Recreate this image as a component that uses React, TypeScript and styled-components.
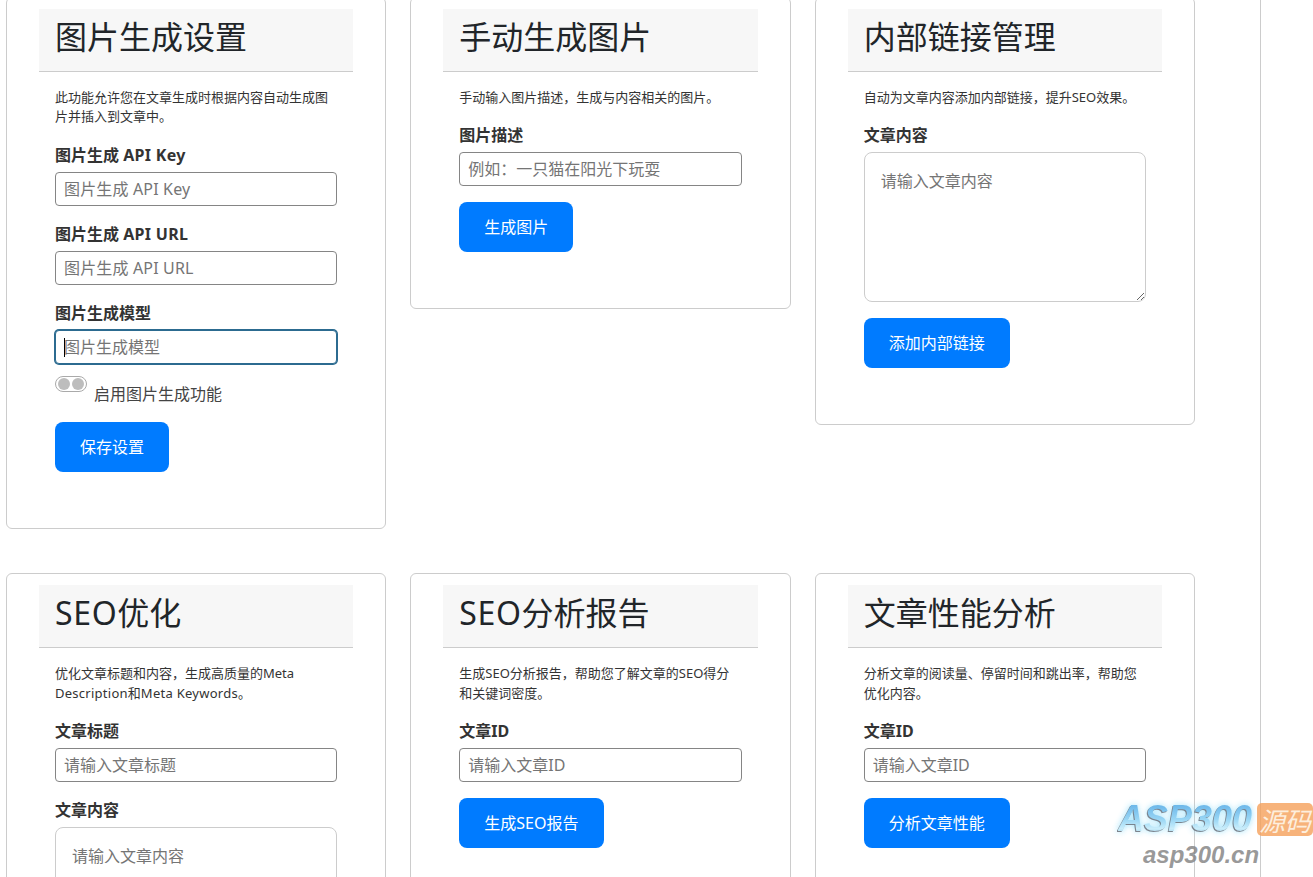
import React from 'react';
import styled, { createGlobalStyle } from 'styled-components';

const GlobalStyle = createGlobalStyle`
  html, body {
    margin: 0;
    height: 877px;
    overflow: hidden;
    background: #fff;
  }
  body {
    font-family: "Noto Sans", "Noto Sans CJK SC", sans-serif;
    color: #333;
    font-size: 16px;
    line-height: 24px;
  }
  * { box-sizing: border-box; }
`;

const Page = styled.main`
  position: relative;
  height: 877px;
  overflow: hidden;
`;

// the page is scrolled a few px in the reference
const Panel = styled.div`
  width: 1261px;
  height: 1200px;
  margin-top: -3.4px;
  padding: 0 65px 0 6px;
  border-right: 1px solid #ccc;
`;

const Grid = styled.div`
  display: grid;
  grid-template-columns: repeat(3, 1fr);
  column-gap: 24px;
  row-gap: 44.4px;
  align-items: start;
`;

const Card = styled.section`
  border: 1px solid #ccc;
  border-radius: 6px;
  padding: 11px 32px 32px;
  background: #fff;
`;

const CardHeader = styled.header`
  background: #f7f7f7;
  border-bottom: 1px solid #ccc;
  padding: 4px 16px 20px;
  height: 63px;
`;

const Title = styled.h3`
  margin: 0;
  font-size: 32px;
  font-weight: 400;
  line-height: 48px;
  color: #212529;
  white-space: nowrap;
`;

// latin runs sit a little wider in the reference
const Latin = styled.span`
  letter-spacing: 0.02em;
`;

const CardBody = styled.div`
  padding: 16px 16px 16px;
`;

const Desc = styled.p`
  margin: 0 0 16px;
  font-size: 13px;
  line-height: 19.5px;
  color: #333;
`;

const Group = styled.div`
  margin-bottom: 16px;
`;

const Label = styled.label`
  display: block;
  font-weight: 700;
  font-size: 16px;
  line-height: 24px;
  margin-bottom: 5px;
  color: #333;
`;

const FieldWrap = styled.div`
  position: relative;
`;

const Input = styled.input<{ $focused?: boolean; $tracked?: boolean }>`
  display: block;
  width: 100%;
  height: 34px;
  padding: 4px 8px;
  font: inherit;
  font-size: 16px;
  line-height: 24px;
  letter-spacing: ${p => (p.$tracked ? '0.16px' : 'normal')};
  color: #333;
  background: #fff;
  border: 1px solid ${p => (p.$focused ? '#2c6b90' : '#858585')};
  border-radius: 4px;
  box-shadow: ${p => (p.$focused ? '0 0 0 1px #2c6b90' : 'none')};
  outline: none;

  &::placeholder {
    color: #757575;
    opacity: 1;
  }
`;

const Caret = styled.span`
  position: absolute;
  left: 9px;
  top: 8px;
  width: 1px;
  height: 19px;
  background: #000;
`;

const TextArea = styled.textarea`
  display: block;
  width: 100%;
  height: 150px;
  padding: 16px;
  font: inherit;
  font-size: 16px;
  line-height: 24px;
  color: #333;
  background: #fff;
  border: 1px solid #ccc;
  border-radius: 8px;
  outline: none;

  &::placeholder {
    color: #757575;
    opacity: 1;
  }
`;

const ToggleRow = styled.div`
  display: flex;
  align-items: flex-start;
  gap: 7px;
  margin: -4px 0 16px;
`;

const Toggle = styled.span`
  display: flex;
  align-items: center;
  justify-content: center;
  gap: 2px;
  width: 32px;
  height: 16px;
  flex: none;
  border: 1px solid #aaa;
  border-radius: 8px;
  background: #fff;
`;

const ToggleDot = styled.span`
  width: 12px;
  height: 12px;
  border-radius: 50%;
  background: #bdbdbd;
`;

const ToggleLabel = styled.span`
  margin-top: 6px;
  font-size: 16px;
  line-height: 24px;
  color: #444;
`;

const Button = styled.button`
  display: block;
  height: 50px;
  padding: 0 25px;
  margin-bottom: 8px;
  font: inherit;
  font-size: 16px;
  color: #fff;
  background: #007bff;
  border: none;
  border-radius: 8px;
`;

const Watermark = styled.div`
  position: absolute;
  left: 1118px;
  top: 800px;
  width: 195px;
  pointer-events: none;
`;

const WatermarkTop = styled.div`
  display: flex;
  align-items: center;
  gap: 5px;
`;

const WatermarkLogo = styled.span`
  font-family: "Liberation Sans", sans-serif;
  font-size: 36px;
  font-weight: 700;
  font-style: italic;
  line-height: 38px;
  background: linear-gradient(180deg, #4fa6e4 0%, #8fd2f4 50%, #c4ecfb 75%, #8cc4e0 100%);
  -webkit-background-clip: text;
  background-clip: text;
  color: transparent;
  filter: drop-shadow(-1px 1px 0 rgba(95, 100, 110, 0.85)) drop-shadow(0 0 3px rgba(120, 215, 250, 0.75));
  opacity: 0.92;
`;

const WatermarkBadge = styled.span`
  width: 58px;
  height: 33px;
  border-radius: 5px;
  background: rgba(245, 160, 90, 0.8);
  color: #fdeedd;
  font-family: "Noto Sans CJK SC", sans-serif;
  font-size: 26px;
  font-style: italic;
  font-weight: 400;
  line-height: 33px;
  text-align: center;
  white-space: nowrap;
`;

const WatermarkUrl = styled.div`
  margin: 3px 0 0 25px;
  font-family: "Liberation Sans", sans-serif;
  font-size: 24px;
  font-weight: 700;
  font-style: italic;
  line-height: 28px;
  color: rgba(135, 135, 135, 0.85);
`;

export default function App() {
  return (
    <Page>
      <GlobalStyle />
      <Panel>
        <Grid>
          <Card>
            <CardHeader>
              <Title>图片生成设置</Title>
            </CardHeader>
            <CardBody>
              <Desc>此功能允许您在文章生成时根据内容自动生成图片并插入到文章中。</Desc>
              <Group>
                <Label>图片生成 <Latin>API Key</Latin></Label>
                <Input $tracked placeholder="图片生成 API Key" />
              </Group>
              <Group>
                <Label>图片生成 <Latin>API URL</Latin></Label>
                <Input $tracked placeholder="图片生成 API URL" />
              </Group>
              <Group>
                <Label>图片生成模型</Label>
                <FieldWrap>
                  <Input $focused placeholder="图片生成模型" />
                  <Caret />
                </FieldWrap>
              </Group>
              <ToggleRow>
                <Toggle>
                  <ToggleDot />
                  <ToggleDot />
                </Toggle>
                <ToggleLabel>启用图片生成功能</ToggleLabel>
              </ToggleRow>
              <Button>保存设置</Button>
            </CardBody>
          </Card>

          <Card>
            <CardHeader>
              <Title>手动生成图片</Title>
            </CardHeader>
            <CardBody>
              <Desc>手动输入图片描述，生成与内容相关的图片。</Desc>
              <Group>
                <Label>图片描述</Label>
                <Input placeholder="例如：一只猫在阳光下玩耍" />
              </Group>
              <Button>生成图片</Button>
            </CardBody>
          </Card>

          <Card>
            <CardHeader>
              <Title>内部链接管理</Title>
            </CardHeader>
            <CardBody>
              <Desc>自动为文章内容添加内部链接，提升SEO效果。</Desc>
              <Group>
                <Label>文章内容</Label>
                <TextArea placeholder="请输入文章内容" />
              </Group>
              <Button>添加内部链接</Button>
            </CardBody>
          </Card>

          <Card>
            <CardHeader>
              <Title><Latin>SEO</Latin>优化</Title>
            </CardHeader>
            <CardBody>
              <Desc>优化文章标题和内容，生成高质量的Meta <Latin>Description</Latin>和<Latin>Meta Keywords</Latin>。</Desc>
              <Group>
                <Label>文章标题</Label>
                <Input placeholder="请输入文章标题" />
              </Group>
              <Group>
                <Label>文章内容</Label>
                <TextArea placeholder="请输入文章内容" />
              </Group>
            </CardBody>
          </Card>

          <Card>
            <CardHeader>
              <Title><Latin>SEO</Latin>分析报告</Title>
            </CardHeader>
            <CardBody>
              <Desc>生成SEO分析报告，帮助您了解文章的SEO得分和关键词密度。</Desc>
              <Group>
                <Label>文章ID</Label>
                <Input placeholder="请输入文章ID" />
              </Group>
              <Button>生成SEO报告</Button>
            </CardBody>
          </Card>

          <Card>
            <CardHeader>
              <Title>文章性能分析</Title>
            </CardHeader>
            <CardBody>
              <Desc>分析文章的阅读量、停留时间和跳出率，帮助您优化内容。</Desc>
              <Group>
                <Label>文章ID</Label>
                <Input placeholder="请输入文章ID" />
              </Group>
              <Button>分析文章性能</Button>
            </CardBody>
          </Card>
        </Grid>
      </Panel>
      <Watermark>
        <WatermarkTop>
          <WatermarkLogo>ASP300</WatermarkLogo>
          <WatermarkBadge>源码</WatermarkBadge>
        </WatermarkTop>
        <WatermarkUrl>asp300.cn</WatermarkUrl>
      </Watermark>
    </Page>
  );
}
